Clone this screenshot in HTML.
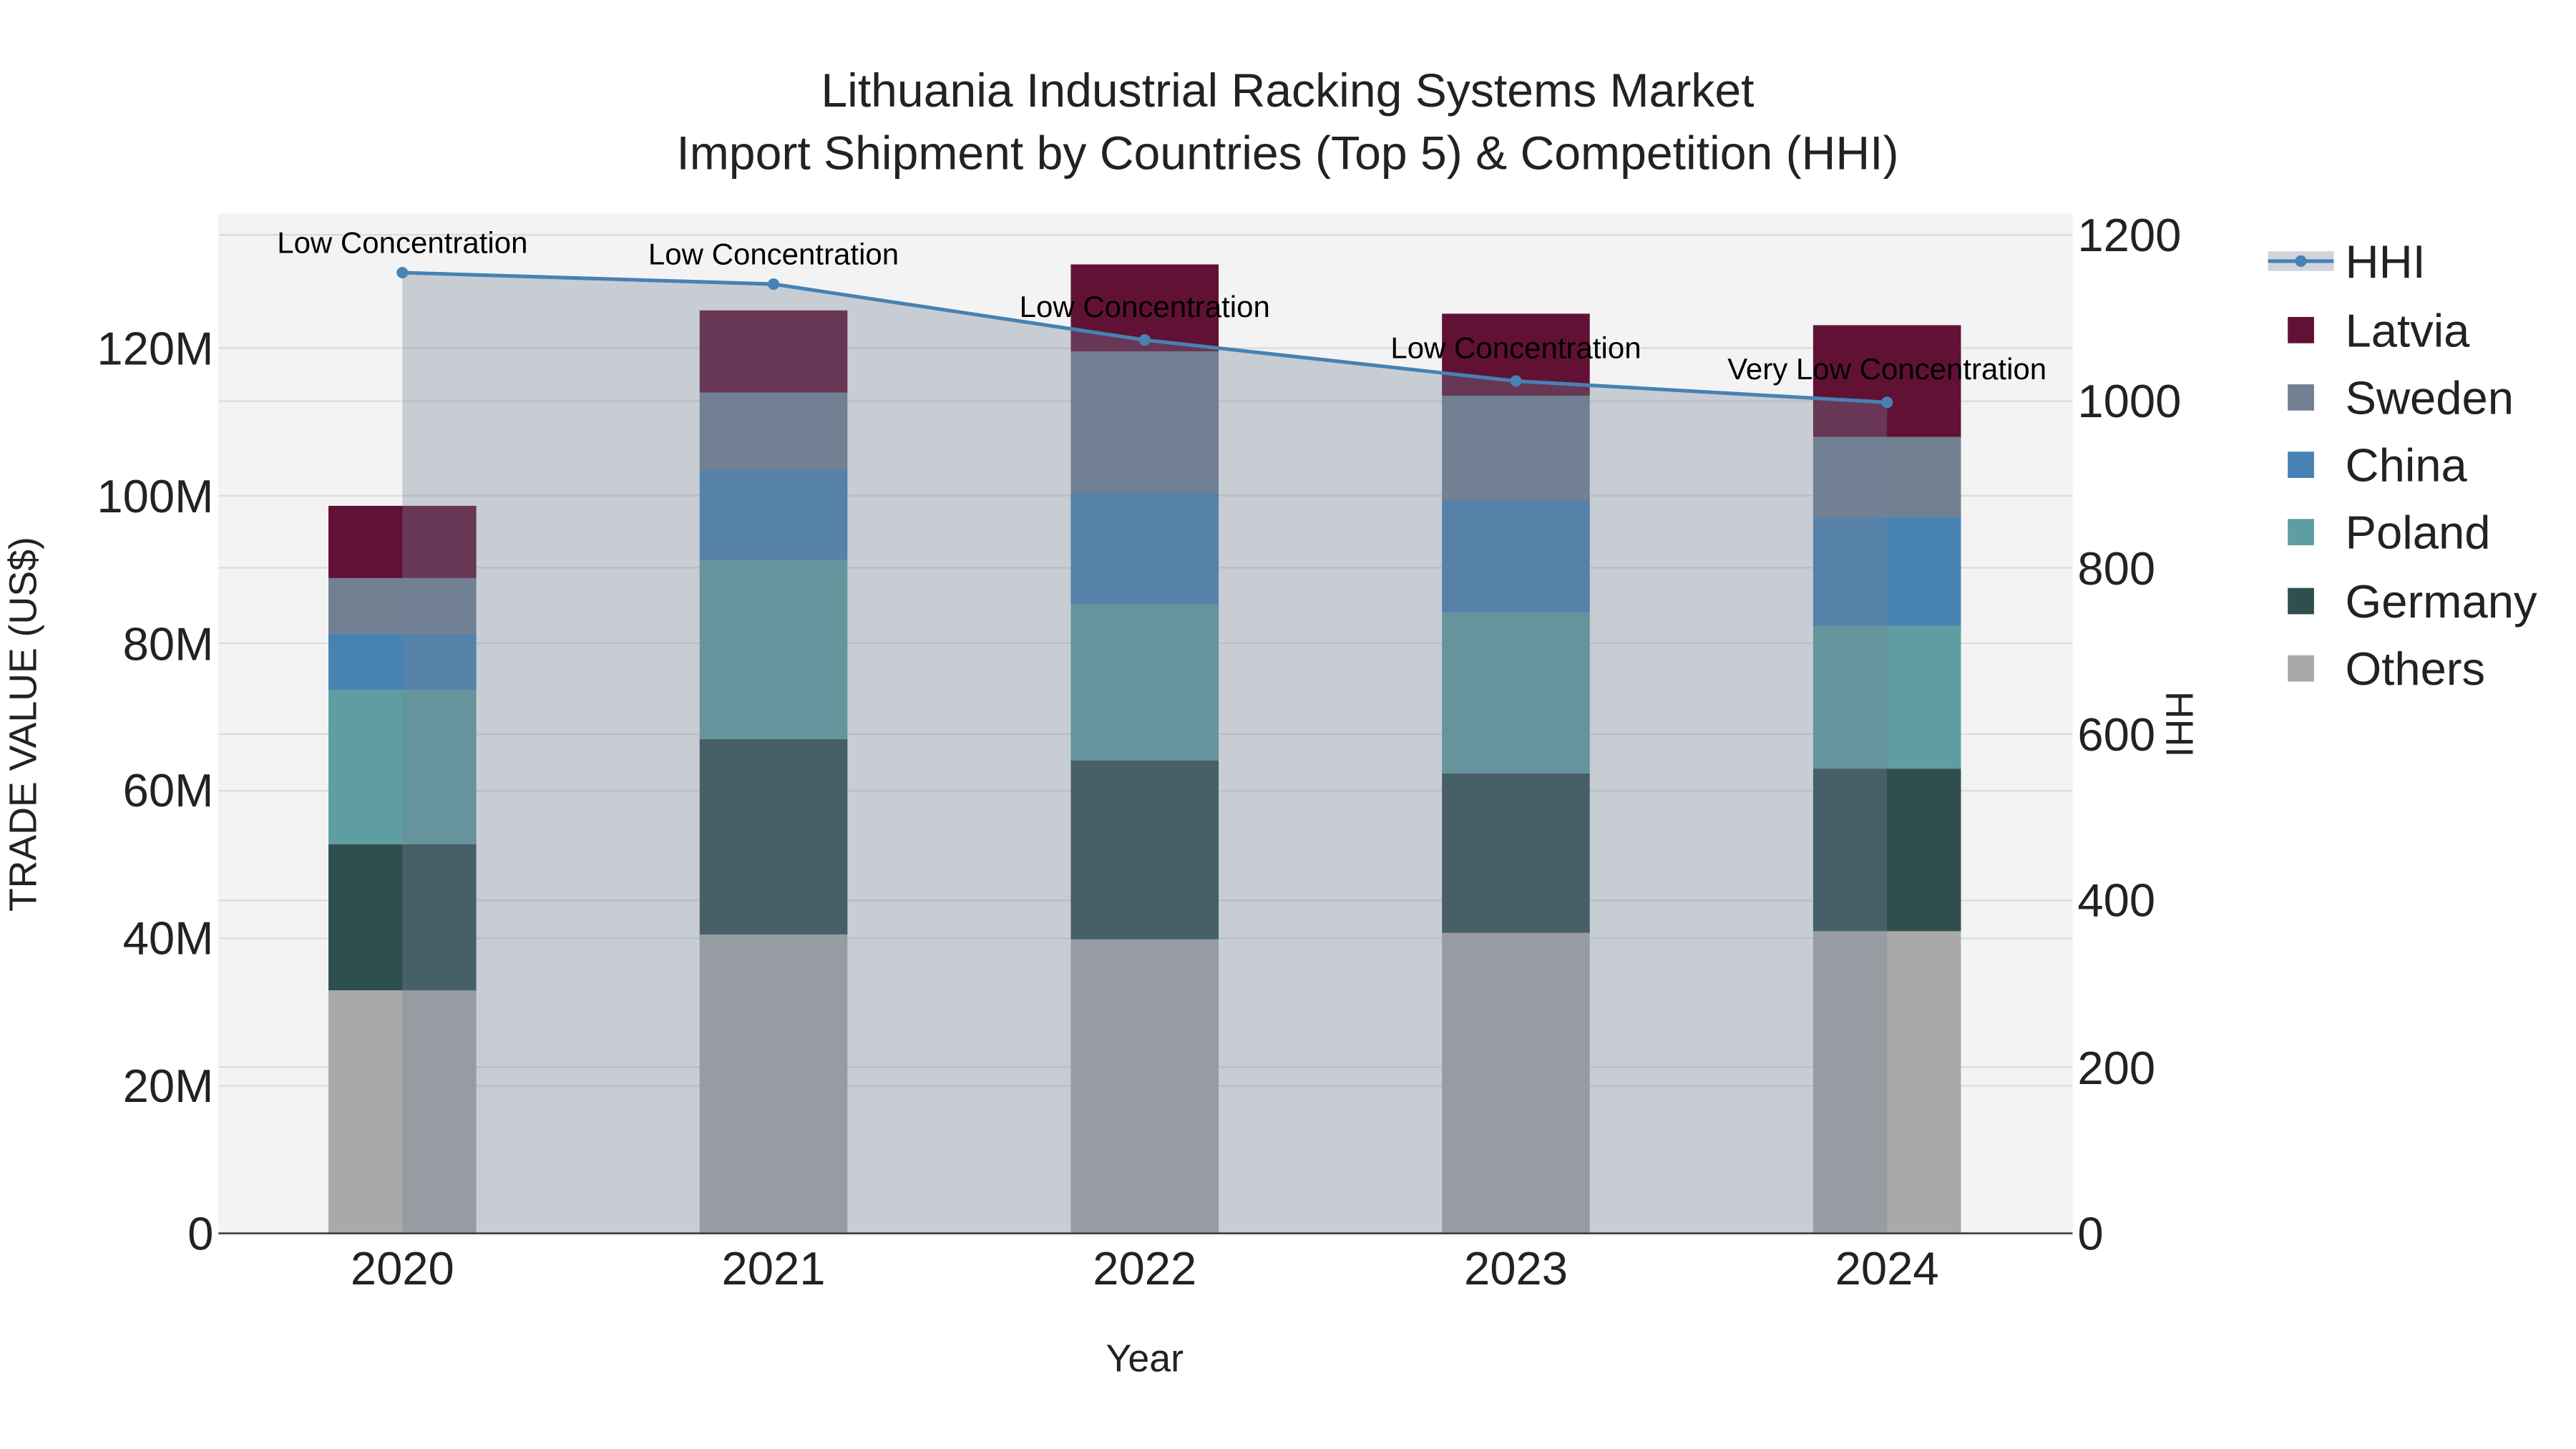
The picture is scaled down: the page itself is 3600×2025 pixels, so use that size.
<!DOCTYPE html>
<html><head><meta charset="utf-8">
<style>
html,body{margin:0;padding:0;background:#fff;}
svg{display:block;}
text{font-family:"Liberation Sans",Arial,sans-serif;}
</style></head>
<body>
<svg width="3600" height="2025" viewBox="0 0 1568.5 882.3" preserveAspectRatio="none" xmlns="http://www.w3.org/2000/svg">
<rect x="0" y="0" width="1600" height="900" fill="#fff"/>
<rect x="133" y="130" width="1129" height="621" fill="#f3f3f3"/>
<g stroke="#dcdcdc" stroke-width="1">
<line x1="133" x2="1262" y1="661.2" y2="661.2"/>
<line x1="133" x2="1262" y1="571.3" y2="571.3"/>
<line x1="133" x2="1262" y1="481.5" y2="481.5"/>
<line x1="133" x2="1262" y1="391.7" y2="391.7"/>
<line x1="133" x2="1262" y1="301.8" y2="301.8"/>
<line x1="133" x2="1262" y1="212" y2="212"/>
<line x1="133" x2="1262" y1="649.7" y2="649.7"/>
<line x1="133" x2="1262" y1="548.3" y2="548.3"/>
<line x1="133" x2="1262" y1="447" y2="447"/>
<line x1="133" x2="1262" y1="345.7" y2="345.7"/>
<line x1="133" x2="1262" y1="244.3" y2="244.3"/>
<line x1="133" x2="1262" y1="143" y2="143"/>
</g>
<g>
<rect x="200" y="603" width="90" height="148" fill="#a9a9a9"/>
<rect x="200" y="514" width="90" height="89" fill="#2f4f4f"/>
<rect x="200" y="420" width="90" height="94" fill="#5f9ea0"/>
<rect x="200" y="386" width="90" height="34" fill="#4682b4"/>
<rect x="200" y="352" width="90" height="34" fill="#708090"/>
<rect x="200" y="308" width="90" height="44" fill="#611234"/>
<rect x="426" y="569" width="90" height="182" fill="#a9a9a9"/>
<rect x="426" y="450" width="90" height="119" fill="#2f4f4f"/>
<rect x="426" y="341" width="90" height="109" fill="#5f9ea0"/>
<rect x="426" y="286" width="90" height="55" fill="#4682b4"/>
<rect x="426" y="239" width="90" height="47" fill="#708090"/>
<rect x="426" y="189" width="90" height="50" fill="#611234"/>
<rect x="652" y="572" width="90" height="179" fill="#a9a9a9"/>
<rect x="652" y="463" width="90" height="109" fill="#2f4f4f"/>
<rect x="652" y="368" width="90" height="95" fill="#5f9ea0"/>
<rect x="652" y="300" width="90" height="68" fill="#4682b4"/>
<rect x="652" y="214" width="90" height="86" fill="#708090"/>
<rect x="652" y="161" width="90" height="53" fill="#611234"/>
<rect x="878" y="568" width="90" height="183" fill="#a9a9a9"/>
<rect x="878" y="471" width="90" height="97" fill="#2f4f4f"/>
<rect x="878" y="373" width="90" height="98" fill="#5f9ea0"/>
<rect x="878" y="305" width="90" height="68" fill="#4682b4"/>
<rect x="878" y="241" width="90" height="64" fill="#708090"/>
<rect x="878" y="191" width="90" height="50" fill="#611234"/>
<rect x="1104" y="567" width="90" height="184" fill="#a9a9a9"/>
<rect x="1104" y="468" width="90" height="99" fill="#2f4f4f"/>
<rect x="1104" y="381" width="90" height="87" fill="#5f9ea0"/>
<rect x="1104" y="315" width="90" height="66" fill="#4682b4"/>
<rect x="1104" y="266" width="90" height="49" fill="#708090"/>
<rect x="1104" y="198" width="90" height="68" fill="#611234"/>
</g>
<polygon points="245,166 471,173 697,207 923,232 1149,245 1149,751 245,751" fill="rgb(117,129,150)" fill-opacity="0.34"/>
<polyline points="245,166 471,173 697,207 923,232 1149,245" fill="none" stroke="#4682b4" stroke-width="2.2"/>
<g fill="#4682b4">
<circle cx="245" cy="166" r="3.5"/><circle cx="471" cy="173" r="3.5"/><circle cx="697" cy="207" r="3.5"/><circle cx="923" cy="232" r="3.5"/><circle cx="1149" cy="245" r="3.5"/>
</g>
<line x1="133" x2="1262" y1="751" y2="751" stroke="#444" stroke-width="1.2"/>
<g font-size="18.3" fill="#000" text-anchor="middle">
<text x="245" y="154">Low Concentration</text>
<text x="471" y="161">Low Concentration</text>
<text x="697" y="193">Low Concentration</text>
<text x="923" y="218">Low Concentration</text>
<text x="1149" y="231">Very Low Concentration</text>
</g>
<g font-size="28.4" fill="#222" text-anchor="end">
<text x="130" y="761">0</text>
<text x="130" y="671">20M</text>
<text x="130" y="581">40M</text>
<text x="130" y="491">60M</text>
<text x="130" y="402">80M</text>
<text x="130" y="312">100M</text>
<text x="130" y="222">120M</text>
</g>
<g font-size="28.4" fill="#222" text-anchor="start">
<text x="1265" y="761">0</text>
<text x="1265" y="660">200</text>
<text x="1265" y="558">400</text>
<text x="1265" y="457">600</text>
<text x="1265" y="356">800</text>
<text x="1265" y="254">1000</text>
<text x="1265" y="153">1200</text>
</g>
<g font-size="28.4" fill="#222" text-anchor="middle">
<text x="245" y="782">2020</text>
<text x="471" y="782">2021</text>
<text x="697" y="782">2022</text>
<text x="923" y="782">2023</text>
<text x="1149" y="782">2024</text>
</g>
<text x="697" y="835" font-size="23.4" fill="#222" text-anchor="middle">Year</text>
<text transform="translate(22,441) rotate(-90)" font-size="23.4" fill="#222" text-anchor="middle">TRADE VALUE (US$)</text>
<text transform="translate(1319,441) rotate(90)" font-size="23.4" fill="#222" text-anchor="middle">HHI</text>
<g font-size="28.8" fill="#222" text-anchor="middle">
<text x="784" y="65">Lithuania Industrial Racking Systems Market</text>
<text x="784" y="103">Import Shipment by Countries (Top 5) &amp; Competition (HHI)</text>
</g>
<g>
<rect x="1381" y="153" width="40" height="12" fill="rgb(117,129,150)" fill-opacity="0.34"/>
<line x1="1381" x2="1421" y1="159" y2="159" stroke="#4682b4" stroke-width="2.2"/>
<circle cx="1401" cy="159" r="3.5" fill="#4682b4"/>
<rect x="1393" y="193" width="16" height="16" fill="#611234"/>
<rect x="1393" y="234" width="16" height="16" fill="#708090"/>
<rect x="1393" y="275" width="16" height="16" fill="#4682b4"/>
<rect x="1393" y="316" width="16" height="16" fill="#5f9ea0"/>
<rect x="1393" y="358" width="16" height="16" fill="#2f4f4f"/>
<rect x="1393" y="399" width="16" height="16" fill="#a9a9a9"/>
<g font-size="28.4" fill="#222">
<text x="1428" y="169">HHI</text>
<text x="1428" y="211">Latvia</text>
<text x="1428" y="252">Sweden</text>
<text x="1428" y="293">China</text>
<text x="1428" y="334">Poland</text>
<text x="1428" y="376">Germany</text>
<text x="1428" y="417">Others</text>
</g>
</g>
</svg>
</body></html>
